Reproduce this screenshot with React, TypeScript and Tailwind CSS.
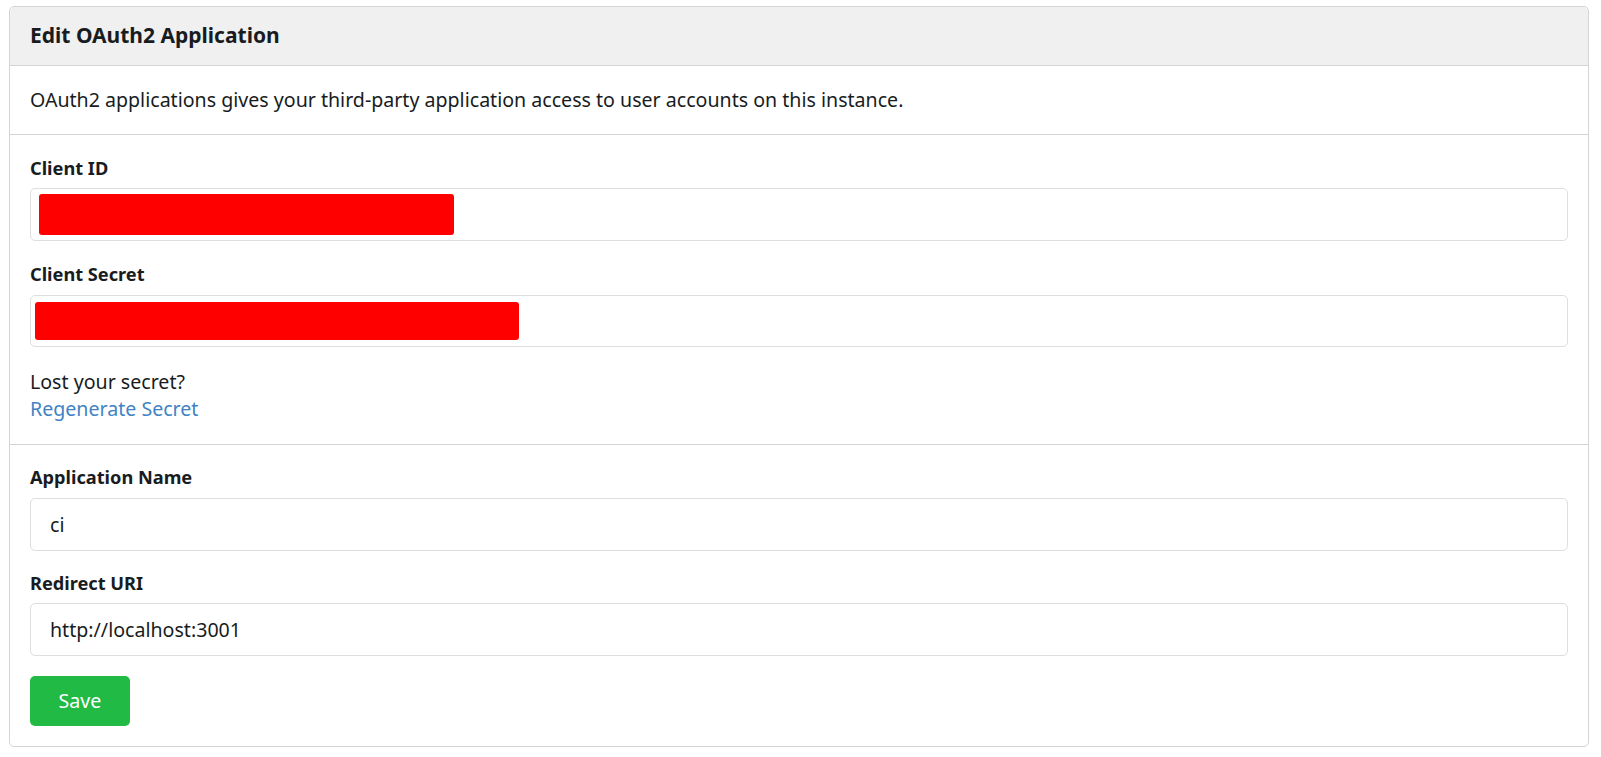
import React from "react";

const Field = ({ label, children }: { label: string; children: React.ReactNode }) => {
  return (
    <div className="flex flex-col">
      <label className="font-bold text-[18.2px] leading-6 mb-[8px]">{label}</label>
      {children}
    </div>
  );
};

const TextBox = ({ value }: { value: string }) => {
  return (
    <div className="h-[53px] border border-[#dedede] rounded-[5px] bg-white flex items-center px-[19px] text-[19.6px]">
      {value}
    </div>
  );
};

const App = () => {
  return (
    <div
      className="min-h-[757px] bg-white pt-[6px] px-[9px] text-[#181c21]"
      style={{ fontFamily: '"Noto Sans", sans-serif' }}
    >
      <div className="border border-[#d4d4d5] rounded-[5px] w-[1580px]">
        <div className="bg-[#f0f0f0] rounded-t-[5px] border-b border-[#d4d4d5] h-[59px] flex items-center px-5">
          <h1 className="font-bold text-[21px]">Edit OAuth2 Application</h1>
        </div>
        <div className="border-b border-[#d4d4d5] px-5 py-[21px] text-[19.6px] leading-[26px]">
          OAuth2 applications gives your third-party application access to user accounts on this instance.
        </div>
        <div className="border-b border-[#d4d4d5] px-5 pt-[21px] pb-[22px] flex flex-col gap-[21px]">
          <Field label="Client ID">
            <div className="h-[53px] border border-[#dedede] rounded-[5px] bg-white flex items-center pl-[8px]">
              <div className="w-[415px] h-[41px] bg-[#ff0000] rounded-[3px]" />
            </div>
          </Field>
          <div className="flex flex-col">
            <label className="font-bold text-[18.2px] leading-6 mb-[9px]">Client Secret</label>
            <div className="h-[52px] border border-[#dedede] rounded-[5px] bg-white flex items-center pl-[4px]">
              <div className="w-[484px] h-[38px] bg-[#ff0000] rounded-[3px]" />
            </div>
          </div>
          <div className="text-[19.6px] leading-[27px]">
            <div>Lost your secret?</div>
            <a href="#" className="text-[#4183c4]">
              Regenerate Secret
            </a>
          </div>
        </div>
        <div className="px-5 pt-[20px] pb-[20px] flex flex-col gap-[20px]">
          <div className="flex flex-col">
            <label className="font-bold text-[18.2px] leading-6 mb-[9px]">Application Name</label>
            <TextBox value="ci" />
          </div>
          <Field label="Redirect URI">
            <TextBox value="http://localhost:3001" />
          </Field>
          <div>
            <button className="bg-[#21ba45] text-white text-[19.6px] rounded-[5px] w-[100px] h-[50px]">
              Save
            </button>
          </div>
        </div>
      </div>
    </div>
  );
};

export default App;
